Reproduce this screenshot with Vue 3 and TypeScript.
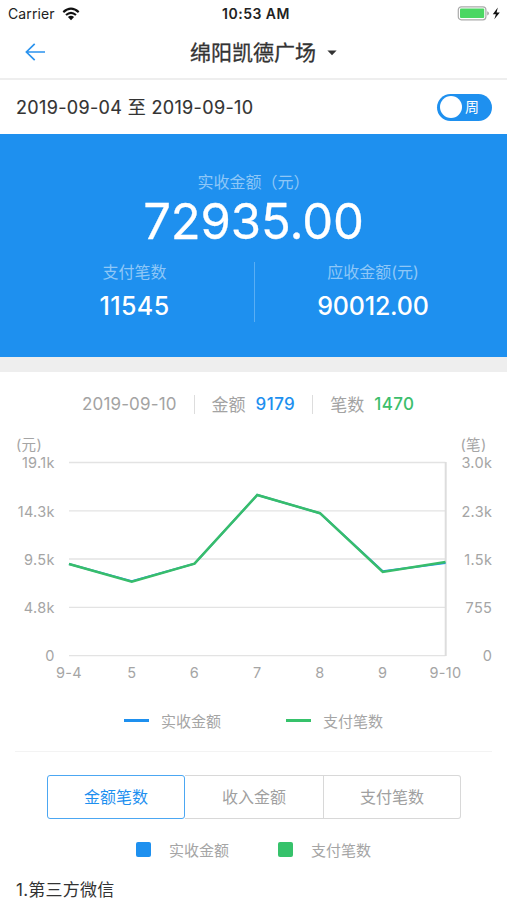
<script setup lang="ts">
import { ref } from 'vue'

interface Tick {
  y: number
  left: string
  right: string
}

const ticks: Tick[] = [
  { y: 32.5, left: '19.1k', right: '3.0k' },
  { y: 80.8, left: '14.3k', right: '2.3k' },
  { y: 129, left: '9.5k', right: '1.5k' },
  { y: 177.3, left: '4.8k', right: '755' },
  { y: 225.6, left: '0', right: '0' },
]

const days: string[] = ['9-4', '5', '6', '7', '8', '9', '9-10']
const dayX = (i: number): number => 69 + i * 62.75

const amountLevels: number[] = [134, 151.3, 133.7, 65, 83.2, 141.3, 132.9]
const countLevels: number[] = [134, 151.7, 133.7, 65, 83.2, 142, 132]
const toPoints = (levels: number[]): string =>
  levels.map((y, i) => `${dayX(i)},${y}`).join(' ')

const tabs: string[] = ['金额笔数', '收入金额', '支付笔数']
const activeTab = ref(0)
</script>

<template>
  <main class="screen">
    <div class="status">
      <div class="carrier">
        <span>Carrier</span>
        <svg class="wifi" width="18" height="14" viewBox="0 0 18 14">
          <path d="M1.3 5.1Q9-1.8 16.7 5.1" />
          <path d="M4 8Q9 3.6 14 8" />
          <path class="dot" d="M5.9 10.1Q9 7.6 12.1 10.1L9 13.2Z" />
        </svg>
      </div>
      <span class="clock">10:53 AM</span>
      <svg class="battery" width="45" height="16" viewBox="0 0 45 16">
        <rect class="case" x="1.3" y=".8" width="27.6" height="13" rx="3" />
        <rect class="charge" x="3" y="2.5" width="24.2" height="9.6" rx="1" />
        <path class="tip" d="M30.2 5.2Q31.9 5.5 31.9 7.3T30.2 9.4Z" />
        <path class="bolt" d="M40.8 1.6L35.8 8.2H38.9L37.3 13.3L42.8 6.4H39.6Z" />
      </svg>
    </div>

    <header class="nav">
      <svg class="back" width="22" height="20" viewBox="0 0 22 20">
        <path d="M20 9H1.4M9.7 .8L1.4 9L9.7 17.2" />
      </svg>
      <h1>绵阳凯德广场</h1>
      <svg class="caret" width="10" height="6" viewBox="0 0 10 6"><path d="M.4.5H9.6L5 5.2Z" /></svg>
    </header>

    <section class="range">
      <span class="dates">2019-09-04 至 2019-09-10</span>
      <button class="switch" type="button"><i class="knob"></i><span>周</span></button>
    </section>

    <section class="summary">
      <div class="label">实收金额（元）</div>
      <div class="total">72935.00</div>
      <div class="split">
        <div class="cell">
          <div class="label">支付笔数</div>
          <div class="value">11545</div>
        </div>
        <div class="cell">
          <div class="label">应收金额(元)</div>
          <div class="value due">90012.00</div>
        </div>
      </div>
    </section>

    <section class="detail">
      <span class="day">2019-09-10</span>
      <i class="bar"></i>
      <span class="key">金额</span><b class="blue">9179</b>
      <i class="bar"></i>
      <span class="key">笔数</span><b class="green">1470</b>
    </section>

    <svg class="chart" width="507" height="260" viewBox="0 0 507 260">
      <text x="16" y="20" class="unit">(元)</text>
      <text x="486.5" y="20" class="unit" text-anchor="end">(笔)</text>
      <g v-for="t in ticks" :key="t.y">
        <line class="grid" x1="69" :y1="t.y" x2="445.5" :y2="t.y" />
        <text x="54.7" :y="t.y + 5.8" text-anchor="end">{{ t.left }}</text>
        <text x="492.2" :y="t.y + 5.8" text-anchor="end">{{ t.right }}</text>
      </g>
      <line class="axis" x1="445.7" y1="32" x2="445.7" y2="226" />
      <polyline class="amount" :points="toPoints(amountLevels)" />
      <polyline class="count" :points="toPoints(countLevels)" />
      <text v-for="(d, i) in days" :key="d" :x="dayX(i)" y="248.4" text-anchor="middle">{{ d }}</text>
    </svg>

    <div class="legend lines">
      <span class="item"><i class="dash bg-blue"></i>实收金额</span>
      <span class="item"><i class="dash bg-green"></i>支付笔数</span>
    </div>

    <div class="tabs">
      <button
        v-for="(tab, i) in tabs"
        :key="tab"
        type="button"
        :class="['tab', { active: i === activeTab }]"
        @click="activeTab = i"
      >{{ tab }}</button>
    </div>

    <div class="legend boxes">
      <span class="item"><i class="box bg-blue"></i>实收金额</span>
      <span class="item"><i class="box bg-green"></i>支付笔数</span>
    </div>

    <h2 class="group">1.第三方微信</h2>
  </main>
</template>

<style>
body {
  margin: 0;
  background: #fff;
}
</style>

<style scoped>
.screen {
  width: 507px;
  height: 900px;
  overflow: hidden;
  background: #fff;
  color: #333;
  font-family: Inter, "Noto Sans CJK SC", sans-serif;
}
.screen, .screen * {
  box-sizing: border-box;
}
button {
  font: inherit;
  padding: 0;
  margin: 0;
}
.status {
  height: 27px;
  display: grid;
  grid-template-columns: 1fr auto 1fr;
  align-items: center;
  padding: 0 5px 0 8px;
  color: #222;
  font-size: 14px;
}
.carrier {
  display: flex;
  align-items: center;
  gap: 7px;
  letter-spacing: .12px;
}
.wifi path {
  fill: none;
  stroke: #111;
  stroke-width: 2.1;
}
.wifi .dot {
  fill: #111;
  stroke: none;
}
.clock {
  font-weight: 600;
  font-size: 14px;
  letter-spacing: .5px;
  padding-left: 2px;
}
.battery {
  justify-self: end;
}
.case {
  fill: #fff;
  stroke: #aaa;
  stroke-width: 1.2;
}
.charge {
  fill: #4bd763;
}
.tip {
  fill: #aaa;
}
.bolt {
  fill: #111;
}
.nav {
  height: 53px;
  border-bottom: 2px solid #eee;
  display: flex;
  align-items: center;
  padding-left: 25px;
}
.back path {
  fill: none;
  stroke: #2b93ee;
  stroke-width: 1.7;
}
h1 {
  margin: 0 0 0 143px;
  font-size: 21px;
  line-height: 30px;
  font-weight: 400;
  width: 126px;
  white-space: nowrap;
  -webkit-text-stroke: .3px #333;
}
.caret {
  margin-left: 11px;
  fill: #333;
}
.range {
  height: 54px;
  display: flex;
  align-items: center;
  justify-content: space-between;
  padding: 0 15px 0 16px;
}
.dates {
  font-size: 18px;
  letter-spacing: .34px;
  margin-top: -2px;
  -webkit-text-stroke: .15px #333;
}
.switch {
  width: 55px;
  height: 27px;
  border: 0;
  border-radius: 14px;
  background: #1e90ef;
  color: #fff;
  display: flex;
  align-items: center;
  gap: 3px;
  padding-left: 3px;
  font-size: 14px;
}
.switch span {
  margin-top: -2px;
}
.knob {
  width: 22px;
  height: 22px;
  border-radius: 50%;
  background: #fff;
}
.summary {
  height: 223px;
  padding-top: 36px;
  background: #1e90ef;
  color: #fff;
  text-align: center;
}
.label {
  font-size: 16px;
  line-height: 24px;
  color: #8ec7f7;
}
.total {
  font-size: 49px;
  line-height: 54px;
  margin: 1px 0 -1px;
  font-weight: 400;
  letter-spacing: -.1px;
  -webkit-text-stroke: .3px #fff;
}
.split {
  display: grid;
  grid-template-columns: 254px 1fr;
  margin-top: 14px;
  height: 58px;
}
.cell {
  padding-left: 15px;
  margin-top: -2px;
}
.cell + .cell {
  padding: 0 16px 0 0;
  margin-top: 0;
  border-left: 1px solid #59aef4;
}
.cell + .cell .label {
  margin-top: -2px;
}
.value {
  font-size: 25px;
  line-height: 32px;
  margin-top: 6px;
  font-weight: 500;
  letter-spacing: .4px;
}
.due {
  letter-spacing: -.2px;
}
.detail {
  height: 73px;
  border-top: 15px solid #eee;
  padding: 6px 0 0 82px;
  display: flex;
  align-items: center;
  font-size: 17px;
  color: #a3a3a3;
}
.day {
  letter-spacing: .15px;
}
.key {
  margin-top: -1px;
}
.bar {
  width: 1px;
  height: 19px;
  background: #ddd;
  margin: 0 17px;
}
.detail b {
  font-weight: 500;
  margin-left: 10px;
  letter-spacing: .4px;
}
.blue {
  color: #1e90ef;
}
.green {
  color: #3cbe6c;
}
.bg-blue {
  background: #1e90ef;
}
.bg-green {
  background: #36c26b;
}
.chart {
  display: block;
}
.chart text {
  fill: #a5a5a5;
  font-size: 14.5px;
  letter-spacing: .3px;
}
.grid {
  stroke: #e3e3e3;
  stroke-width: 1.3;
}
.axis {
  stroke: #ddd;
  stroke-width: 2;
}
polyline {
  fill: none;
  stroke-width: 2.5;
}
.amount {
  stroke: #1e90ef;
  stroke-width: 2;
}
.count {
  stroke: #38bd6b;
}
.legend {
  display: flex;
  font-size: 15px;
  color: #a5a5a5;
}
.item {
  display: flex;
  align-items: center;
}
.lines {
  margin: 0 15px;
  height: 62px;
  padding: 0 0 1px 109px;
  gap: 65px;
  border-bottom: 1px solid #f3f3f3;
}
.dash {
  width: 25px;
  height: 3px;
  margin-right: 12px;
}
.tabs {
  display: grid;
  grid-template-columns: 138px 139px 137px;
  margin: 23px 0 0 47px;
  height: 44px;
}
.tab {
  border: 1.5px solid #d8d8d8;
  border-left-width: 0;
  background: #fff;
  color: #a0a0a0;
  font-size: 16px;
  padding-bottom: 2px;
}
.tab:last-child {
  border-radius: 0 3px 3px 0;
}
.tab.active {
  border: 1.5px solid #4ca7f2;
  border-radius: 3px;
  color: #1e90ef;
}
.boxes {
  height: 61px;
  padding-left: 136px;
  gap: 48px;
}
.box {
  width: 15px;
  height: 15px;
  border-radius: 2px;
  margin-right: 18px;
}
.boxes .item + .item {
  margin-left: 1px;
}
.group {
  margin: -3px 0 0 16px;
  font-size: 17px;
  line-height: 26px;
  font-weight: 400;
  letter-spacing: .25px;
}
</style>
